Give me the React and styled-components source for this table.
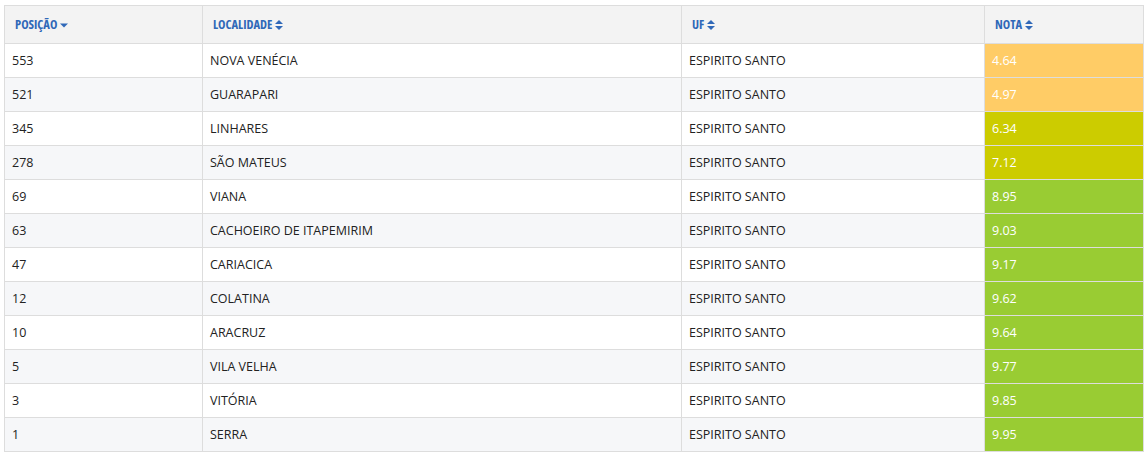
import React from "react";
import styled, { createGlobalStyle } from "styled-components";

const Global = createGlobalStyle`
  html, body { margin: 0; padding: 0; background: #fff; }
  body { padding: 5px 5px 0 4px; font-family: "Open Sans", "Liberation Sans", sans-serif; }
`;

const Table = styled.table`
  width: 1139px;
  border-collapse: collapse;
  table-layout: fixed;
  border: 1px solid #dddddd;
  font-size: 12.5px;
  color: #222;
`;

const Th = styled.th`
  height: 37px;
  padding: 0 10px;
  text-align: left;
  background: #f3f3f3;
  border: 1px solid #dddddd;
  color: #2f68b8;
  font-family: "Open Sans", "DejaVu Sans", sans-serif;
  font-stretch: 75%;
  font-weight: 700;
  font-size: 12.5px;
  white-space: nowrap;
`;

const HeadInner = styled.span`
  display: inline-flex;
  align-items: center;
  gap: 3px;
`;

const Row = styled.tr`
  background: ${(p) => (p.$alt ? "#f6f7f9" : "#ffffff")};
`;

const Td = styled.td`
  height: 33px;
  padding: 0 7px;
  border: 1px solid #dddddd;
  white-space: nowrap;
`;

const NotaCell = styled(Td)`
  background: ${(p) => p.$bg};
  color: #ffffff;
`;

const SortIcon = ({ down }) =>
  down ? (
    <svg width="8" height="8" viewBox="0 0 8 8">
      <path d="M0 2.5 L8 2.5 L4 6.5 Z" fill="#2f68b8" />
    </svg>
  ) : (
    <svg width="8" height="10" viewBox="0 0 8 10">
      <path d="M0 4 L8 4 L4 0 Z M0 6 L8 6 L4 10 Z" fill="#2f68b8" />
    </svg>
  );

const data = [
  [553, "NOVA VENÉCIA", "4.64"],
  [521, "GUARAPARI", "4.97"],
  [345, "LINHARES", "6.34"],
  [278, "SÃO MATEUS", "7.12"],
  [69, "VIANA", "8.95"],
  [63, "CACHOEIRO DE ITAPEMIRIM", "9.03"],
  [47, "CARIACICA", "9.17"],
  [12, "COLATINA", "9.62"],
  [10, "ARACRUZ", "9.64"],
  [5, "VILA VELHA", "9.77"],
  [3, "VITÓRIA", "9.85"],
  [1, "SERRA", "9.95"],
];

const colorFor = (n) => {
  const v = parseFloat(n);
  if (v < 5) return "#ffcc66";
  if (v < 8) return "#cccc00";
  return "#99cc33";
};

export default function App() {
  return (
    <>
      <Global />
      <Table>
        <colgroup>
          <col style={{ width: 198 }} />
          <col style={{ width: 479 }} />
          <col style={{ width: 303 }} />
          <col style={{ width: 159 }} />
        </colgroup>
        <thead>
          <tr>
            <Th><HeadInner>POSIÇÃO <SortIcon down /></HeadInner></Th>
            <Th><HeadInner>LOCALIDADE <SortIcon /></HeadInner></Th>
            <Th><HeadInner>UF <SortIcon /></HeadInner></Th>
            <Th><HeadInner>NOTA <SortIcon /></HeadInner></Th>
          </tr>
        </thead>
        <tbody>
          {data.map(([pos, loc, nota], i) => (
            <Row key={pos} $alt={i % 2 === 1}>
              <Td>{pos}</Td>
              <Td>{loc}</Td>
              <Td>ESPIRITO SANTO</Td>
              <NotaCell $bg={colorFor(nota)}>{nota}</NotaCell>
            </Row>
          ))}
        </tbody>
      </Table>
    </>
  );
}
